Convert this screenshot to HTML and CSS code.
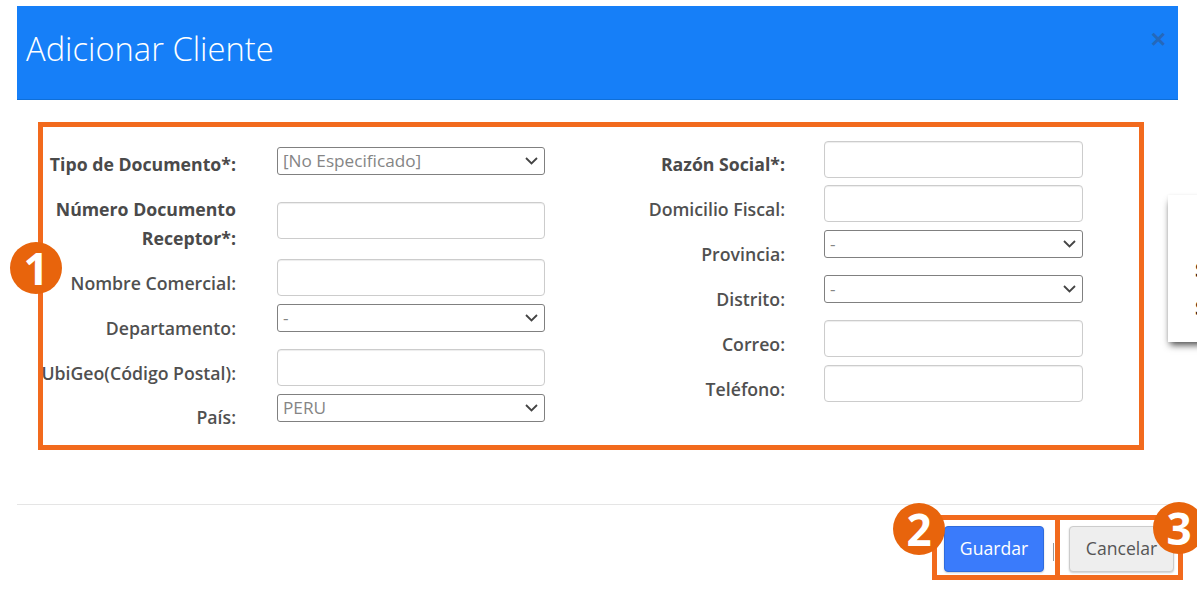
FILE: index.html
```html
<!DOCTYPE html>
<html lang="es">
<head>
<meta charset="utf-8">
<title>Adicionar Cliente</title>
<link rel="stylesheet" href="styles.css">
</head>
<body>
<aside class="side-card"><span>S</span><span>S</span></aside>
<main class="modal">
  <header class="modal-header">
    <h1>Adicionar Cliente</h1>
    <span class="close">×</span>
  </header>
  <form class="modal-body">
    <div class="col col-left">
      <div class="row row-first"><label class="strong">Tipo de Documento*:</label><select class="push-7"><option>[No Especificado]</option></select></div>
      <div class="row row-tall"><label class="strong">Número Documento Receptor*:</label><input class="push-16" type="text"></div>
      <div class="row"><label>Nombre Comercial:</label><input type="text"></div>
      <div class="row"><label>Departamento:</label><select><option>-</option></select></div>
      <div class="row"><label>UbiGeo(Código Postal):</label><input type="text"></div>
      <div class="row row-last"><label>País:</label><select><option>PERU</option></select></div>
    </div>
    <div class="col col-right">
      <div class="row row-first"><label class="strong">Razón Social*:</label><input type="text"></div>
      <div class="row"><label>Domicilio Fiscal:</label><input type="text"></div>
      <div class="row"><label>Provincia:</label><select><option>-</option></select></div>
      <div class="row"><label>Distrito:</label><select><option>-</option></select></div>
      <div class="row"><label>Correo:</label><input type="text"></div>
      <div class="row"><label>Teléfono:</label><input type="text"></div>
    </div>
  </form>
  <footer class="modal-footer">
    <button class="btn btn-primary" type="button">Guardar</button>
    <span class="sep"></span>
    <button class="btn btn-default" type="button">Cancelar</button>
  </footer>
</main>
<div class="mark mark-form"></div>
<div class="mark mark-save"></div>
<div class="mark mark-cancel"></div>
<div class="badge badge-1">1</div>
<div class="badge badge-2">2</div>
<div class="badge badge-3">3</div>
</body>
</html>
```
FILE: styles.css
```css
* { box-sizing: border-box; }
html, body { margin: 0; height: 590px; overflow: hidden; background: #fff; }
body { position: relative; font-family: "Open Sans", "Liberation Sans", sans-serif; color: #4d4d4d; font-size: 17.6px; }

.modal { width: 1161px; margin: 6px 0 0 17px; }
.modal-header { position: relative; height: 94px; background: #167ff8; border-bottom: 1px solid #0f6fd8; display: flex; align-items: center; padding: 0 9px; }
.modal-header h1 { margin: 0 0 7px; font-size: 32.7px; font-weight: 300; color: #fff; line-height: 44px; }
.close { position: absolute; right: 12px; top: 17px; font: 700 26px/32px "Liberation Sans", sans-serif; color: #2568ba; }

.modal-body { height: 405px; display: flex; padding: 41px 0 0 24px; border-bottom: 1px solid #e5e5e5; }
.col-left { width: 504px; }
.col-right { width: 493px; margin-left: 45px; }
.row { display: flex; align-items: flex-start; height: 45px; }
.row.row-first { height: 44.4px; }
.row.row-tall { height: 73.6px; }
.row label { flex: none; width: 195px; padding-top: 10px; text-align: right; font-size: 17.7px; font-weight: 600; line-height: 28.5px; color: #505050; }
.row.row-first label, .row.row-last label { padding-top: 9px; }
.row label.strong { font-weight: 700; color: #4a4a4a; }
.col-left input, .col-left select { margin-left: 41px; width: 268.5px; }
.col-right input, .col-right select { margin-left: 39px; width: 259px; }
input { height: 37px; border: 1px solid #ccc; border-radius: 4px; background: #fff; box-shadow: inset 0 1px 1px rgba(0,0,0,.075); font: inherit; }
select { appearance: none; height: 28px; border: 1px solid #808080; border-radius: 3px; color: #858585; font: 17.2px/20px "Open Sans", sans-serif; padding: 0 24px 0 5px; background: #fff url("data:image/svg+xml,%3Csvg xmlns='http://www.w3.org/2000/svg' width='13' height='8' viewBox='0 0 13 8'%3E%3Cpath d='M1 1l5.5 5.5L12 1' fill='none' stroke='%23444' stroke-width='1.8'/%3E%3C/svg%3E") no-repeat right 6px center; }
.col-left select.push-7 { margin-top: 6px; }
.col-left input.push-16 { margin-top: 16.6px; }

.modal-footer { display: flex; justify-content: flex-end; align-items: flex-start; height: 85px; padding: 21px 4px 0 0; }
.btn { height: 46px; border-radius: 4px; padding: 0 0 2px; font: 17.6px "Open Sans", sans-serif; box-shadow: 0 1px 2px rgba(0,0,0,.2); }
.btn-primary { width: 100px; background: #3a7bfb; border: 1px solid #2f6bdc; color: #fff; }
.btn-default { width: 105px; background: #eee; border: 1px solid #ccc; color: #555; }
.sep { width: 1px; height: 18px; margin: 17px 15px 0 9px; background: #999; }

.side-card { position: absolute; left: 1168px; top: 195px; width: 60px; height: 147px; background: #fff; box-shadow: 0 5px 7px -2px rgba(0,0,0,.7), 0 0 3px rgba(0,0,0,.06); padding: 56px 0 0 27px; font: 700 20px/38px "Open Sans", sans-serif; color: #222; display: flex; flex-direction: column; }

.mark { position: absolute; border: 5px solid #f26a1d; }
.mark-form { left: 38px; top: 122px; width: 1106px; height: 328px; }
.mark-save { left: 932px; top: 515px; width: 128px; height: 65px; }
.mark-cancel { left: 1055px; top: 515px; width: 128px; height: 65px; }

.badge { position: absolute; width: 52px; height: 52px; border-radius: 50%; background: #e8640c; color: #fff; font-size: 44px; font-weight: 700; line-height: 52px; text-align: center; }
.badge-1 { left: 10px; top: 242px; }
.badge-2 { left: 893px; top: 503px; }
.badge-3 { left: 1153px; top: 502px; }
```
